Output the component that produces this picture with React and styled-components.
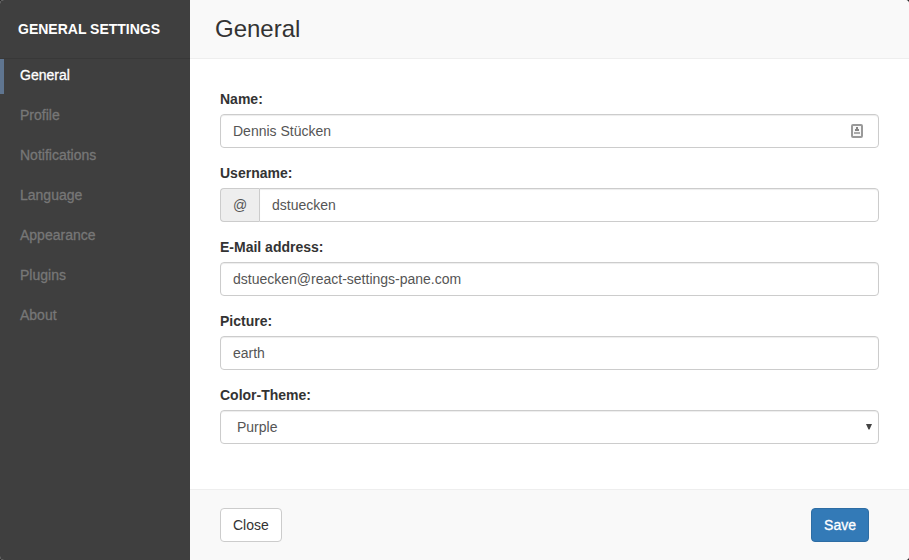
import React, { useState } from "react";
import styled, { createGlobalStyle, css } from "styled-components";

const GlobalStyle = createGlobalStyle`
  *, *::before, *::after { box-sizing: border-box; }
  body {
    margin: 0;
    background: #2b2b2b;
    color: #333;
    font: 14px/20px "Liberation Sans", Arial, sans-serif;
  }
`;

const Pane = styled.div`
  display: flex;
  min-height: 100vh;
  border-radius: 4px;
  overflow: hidden;
  background: #fff;
`;

const Sidebar = styled.aside`
  flex: 0 0 190px;
  background: #3f3f3f;
`;

const SidebarTitle = styled.h2`
  margin: 0;
  height: 59px;
  padding: 0 18px;
  border-bottom: 1px solid #383838;
  color: #fff;
  font-size: 14px;
  font-weight: bold;
  line-height: 58px;
  white-space: nowrap;
`;

const Menu = styled.ul`
  display: flex;
  flex-direction: column;
  gap: 5px;
  margin: 0;
  padding: 0;
  list-style: none;
`;

const MenuLink = styled.a`
  display: block;
  height: 35px;
  padding-left: 16px;
  border-left: 4px solid ${(p) => (p.$active ? "#5f7590" : "transparent")};
  color: ${(p) => (p.$active ? "#fff" : "#777")};
  line-height: 32px;
  text-decoration: none;
  -webkit-text-stroke: 0.3px currentColor;
`;

const Main = styled.form`
  display: flex;
  flex: 1;
  flex-direction: column;
  min-width: 0;
`;

const Header = styled.header`
  height: 59px;
  padding: 0 25px;
  border-bottom: 1px solid #eee;
  background: #f9f9f9;
`;

const Title = styled.h1`
  margin: 0;
  font-size: 24px;
  font-weight: normal;
  line-height: 58px;
`;

const Content = styled.div`
  display: flex;
  flex: 1;
  flex-direction: column;
  gap: 15px;
  padding: 30px;
`;

const Field = styled.div`
  display: flex;
  flex-direction: column;
  gap: 5px;
`;

const Label = styled.label`
  align-self: flex-start;
  font-weight: bold;
`;

const controlStyle = css`
  display: block;
  flex: 1;
  width: 100%;
  min-width: 0;
  height: 34px;
  min-height: 34px;
  padding: 6px 12px;
  border: 1px solid #ccc;
  border-radius: 4px;
  outline: none;
  background: #fff;
  box-shadow: inset 0 1px 1px rgba(0, 0, 0, 0.075);
  color: #555;
  font: inherit;

  &:focus-visible { border-color: #66afe9; }
`;

const Control = styled.input`
  ${controlStyle}
`;

const InputGroup = styled.div`
  display: flex;

  ${Control} { border-radius: 0 4px 4px 0; }
`;

const Addon = styled.span`
  width: 39px;
  border: 1px solid #ccc;
  border-right: 0;
  border-radius: 4px 0 0 4px;
  background: #eee;
  color: #555;
  line-height: 32px;
  text-align: center;
`;

const Overlay = styled.div`
  position: relative;

  > svg {
    position: absolute;
    pointer-events: none;
  }
`;

const NameBox = styled(Overlay)`
  > svg { top: 9px; right: 15px; }
`;

const SelectBox = styled(Overlay)`
  > svg { top: 13px; right: 6px; }
`;

const Select = styled.select`
  ${controlStyle}
  padding-left: 16px;
  appearance: none;
`;

const Footer = styled.footer`
  display: flex;
  justify-content: space-between;
  padding: 18px 40px 18px 30px;
  border-top: 1px solid #eee;
  background: #f9f9f9;
`;

const Button = styled.button`
  height: 34px;
  padding: 0 12px;
  border: 1px solid ${(p) => (p.$primary ? "#2e6da4" : "#ccc")};
  border-radius: 4px;
  background: ${(p) => (p.$primary ? "#337ab7" : "#fff")};
  color: ${(p) => (p.$primary ? "#fff" : "#333")};
  font: inherit;
  cursor: pointer;
  ${(p) => p.$primary && "-webkit-text-stroke: 0.3px currentColor;"}
`;

const ContactIcon = () => (
  <svg width="14" height="16" viewBox="0 0 14 16" aria-hidden="true">
    <rect x="2" y="2" width="10" height="12" rx="1" fill="#f8f8f8" stroke="#999" strokeWidth="2" />
    <path d="M6 4h2v2h1v2H5V6h1z" fill="#858585" />
    <path d="M4 9h6v2H4z" fill="#aaa" />
  </svg>
);

const Arrow = () => (
  <svg width="8" height="8" viewBox="0 0 8 8" aria-hidden="true">
    <path d="M1 1h6L4.5 6.5h-1z" fill="#444" />
  </svg>
);

const sections = ["General", "Profile", "Notifications", "Language", "Appearance", "Plugins", "About"];

export default function App() {
  const [active, setActive] = useState("General");

  return (
    <>
      <GlobalStyle />
      <Pane>
        <Sidebar>
          <SidebarTitle>GENERAL SETTINGS</SidebarTitle>
          <nav>
            <Menu>
              {sections.map((name) => (
                <li key={name}>
                  <MenuLink
                    href={`#${name.toLowerCase()}`}
                    $active={name === active}
                    aria-current={name === active ? "page" : undefined}
                    onClick={() => setActive(name)}
                  >
                    {name}
                  </MenuLink>
                </li>
              ))}
            </Menu>
          </nav>
        </Sidebar>
        <Main onSubmit={(e) => e.preventDefault()}>
          <Header>
            <Title>{active}</Title>
          </Header>
          <Content>
            <Field>
              <Label htmlFor="name">Name:</Label>
              <NameBox>
                <Control id="name" type="text" defaultValue="Dennis Stücken" />
                <ContactIcon />
              </NameBox>
            </Field>
            <Field>
              <Label htmlFor="username">Username:</Label>
              <InputGroup>
                <Addon>@</Addon>
                <Control id="username" type="text" defaultValue="dstuecken" />
              </InputGroup>
            </Field>
            <Field>
              <Label htmlFor="email">E-Mail address:</Label>
              <Control id="email" type="email" defaultValue="dstuecken@react-settings-pane.com" />
            </Field>
            <Field>
              <Label htmlFor="picture">Picture:</Label>
              <Control id="picture" type="text" defaultValue="earth" />
            </Field>
            <Field>
              <Label htmlFor="theme">Color-Theme:</Label>
              <SelectBox>
                <Select id="theme" defaultValue="Purple">
                  <option>Purple</option>
                  <option>Blue</option>
                  <option>Orange</option>
                </Select>
                <Arrow />
              </SelectBox>
            </Field>
          </Content>
          <Footer>
            <Button type="button">Close</Button>
            <Button type="submit" $primary>Save</Button>
          </Footer>
        </Main>
      </Pane>
    </>
  );
}
